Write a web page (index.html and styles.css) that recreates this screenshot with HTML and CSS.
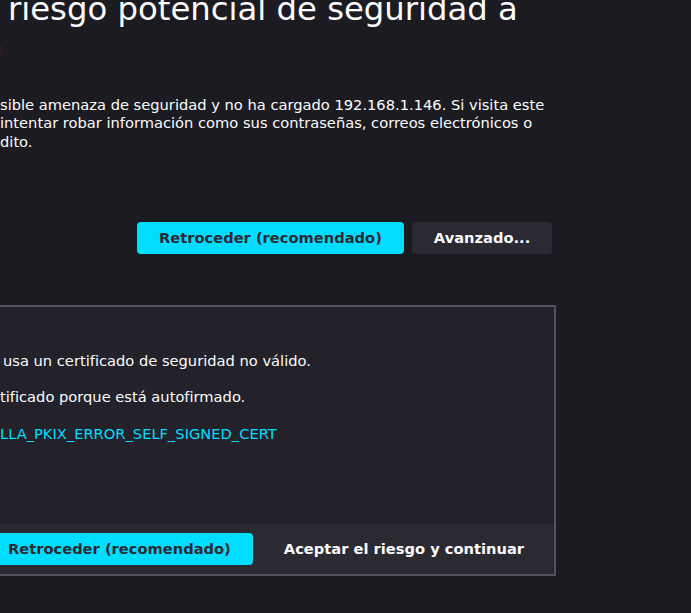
FILE: index.html
```html
<!DOCTYPE html>
<html lang="es">
<head>
<meta charset="utf-8">
<title>Advertencia: riesgo potencial de seguridad a continuación</title>
<link rel="stylesheet" href="styles.css">
</head>
<body>
<main class="page">
  <h1 class="title">riesgo potencial de seguridad a</h1>
  <div class="mark"></div>
  <div class="intro">
    <p class="line l1">sible amenaza de seguridad y no ha cargado 192.168.1.146. Si visita este</p>
    <p class="line l2">intentar robar información como sus contraseñas, correos electrónicos o</p>
    <p class="line l3">dito.</p>
  </div>
  <div class="actions">
    <button class="btn primary">Retroceder (recomendado)</button>
    <button class="btn secondary">Avanzado...</button>
  </div>
  <section class="advanced">
    <div class="adv-body">
      <p class="adv-line a1">usa un certificado de seguridad no válido.</p>
      <p class="adv-line a2">tificado porque está autofirmado.</p>
      <a class="adv-line code" href="#">LLA_PKIX_ERROR_SELF_SIGNED_CERT</a>
    </div>
    <div class="adv-foot">
      <button class="btn primary">Retroceder (recomendado)</button>
      <button class="btn secondary">Aceptar el riesgo y continuar</button>
    </div>
  </section>
</main>
</body>
</html>
```

FILE: styles.css
```css
html, body {
  margin: 0;
  padding: 0;
  background: #1c1b22;
  overflow: hidden;
}

body {
  font-family: "DejaVu Sans", sans-serif;
  font-size: 14.67px;
  color: #fbfbfe;
  width: 691px;
  height: 613px;
}

.page {
  display: flex;
  flex-direction: column;
  align-items: flex-start;
}

.title {
  margin: -10px 0 0 8px;
  font-size: 32.3px;
  font-weight: 400;
  line-height: 38.8px;
  white-space: nowrap;
}

.mark {
  width: 2px;
  height: 13px;
  margin-top: 16px;
  background: #2f1c22;
}

.intro {
  margin-top: 38px;
}

.line {
  margin: 0;
  line-height: 18.6px;
  white-space: nowrap;
}

.l2 {
  padding-left: 0;
}

.actions {
  display: flex;
  gap: 8px;
  margin: 70px 0 0 137px;
}

.btn {
  font-family: "DejaVu Sans", sans-serif;
  font-size: 14.67px;
  font-weight: 700;
  height: 32px;
  padding: 0 22px;
  border: none;
  border-radius: 4px;
  flex-shrink: 0;
  white-space: nowrap;
}

.primary {
  background: #00ddff;
  color: #2b2a33;
}

.secondary {
  background: #2b2a33;
  color: #fbfbfe;
}

.actions .secondary {
  padding: 0 22px;
}

.advanced {
  box-sizing: border-box;
  width: 556px;
  margin-top: 51px;
  background: #23222b;
  border: 2px solid #54535d;
  border-left: none;
}

.adv-body {
  display: flex;
  flex-direction: column;
  align-items: flex-start;
  gap: 17.5px;
  padding: 44px 0 81px 0;
}

.adv-line {
  margin: 0;
  line-height: 19px;
  white-space: nowrap;
}

.a1 {
  padding-left: 3px;
}

.code {
  color: #00ddff;
  text-decoration: none;
}

.adv-foot {
  display: flex;
  justify-content: flex-end;
  gap: 9px;
  padding: 9px 8px 9px 0;
  background: #2b2a33;
}
```
